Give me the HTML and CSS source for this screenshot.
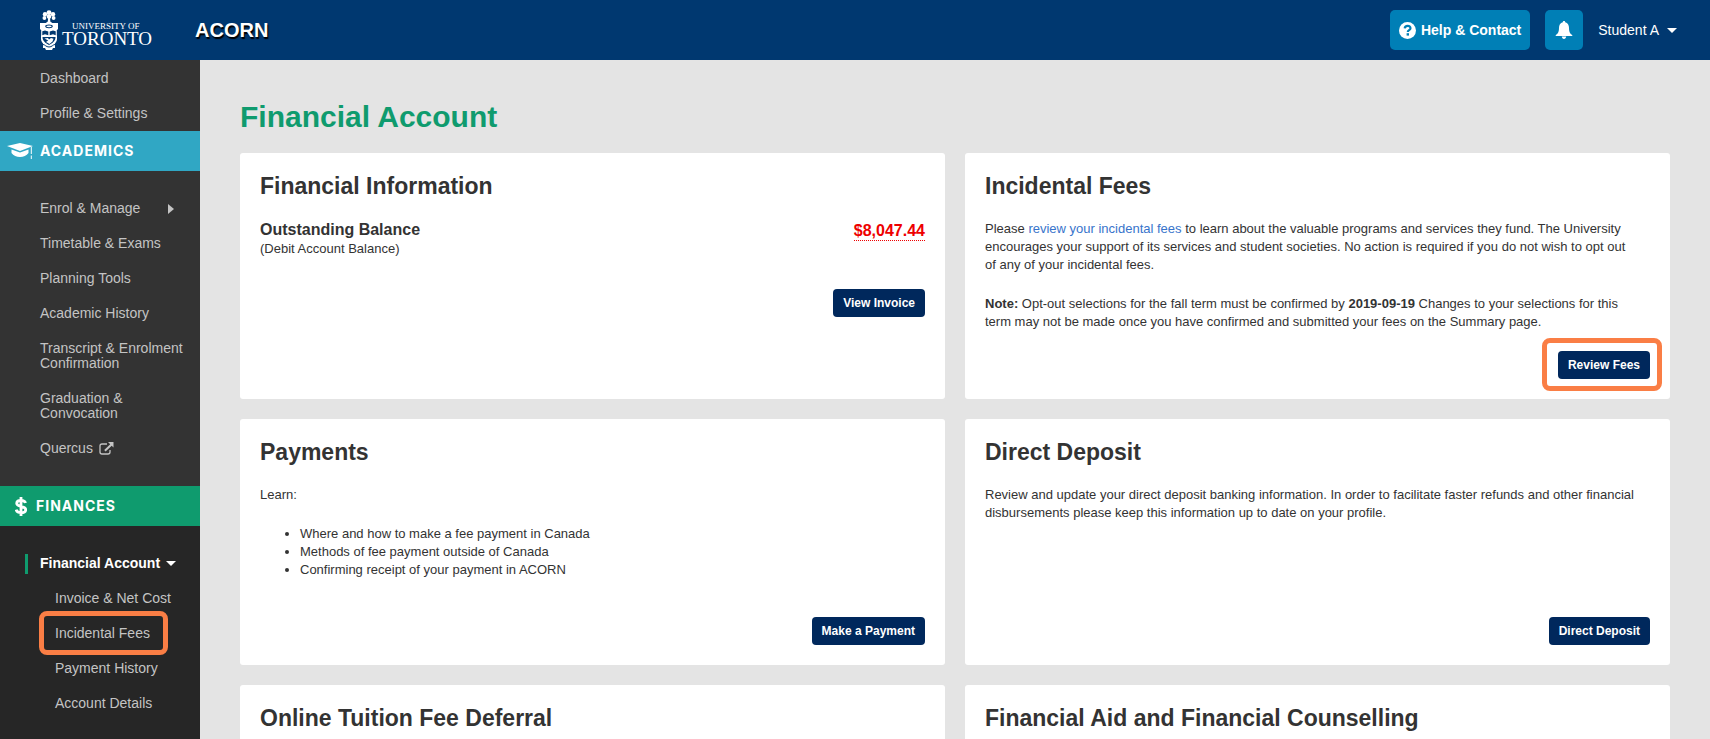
FILE: index.html
```
<!DOCTYPE html>
<html lang="en">
<head>
<meta charset="utf-8">
<meta name="viewport" content="width=device-width, initial-scale=1">
<title>Financial Account - ACORN</title>
<link rel="stylesheet" href="styles.css">
</head>
<body>
<header class="topbar">
  <a class="logo" href="#">
    <svg class="crest" viewBox="0 0 18 40" width="18" height="40" aria-hidden="true">
      <g fill="#fff">
        <circle cx="9" cy="2.6" r="2.4"/><circle cx="5" cy="4.2" r="2.2"/><circle cx="13" cy="4.2" r="2.2"/>
        <circle cx="4.4" cy="8" r="1.9"/><circle cx="13.6" cy="8" r="1.9"/><circle cx="9" cy="6.5" r="2.3"/>
        <path d="M8.200 7h1.800l.3 4.500 2 1.500H5.800l2-1.500z"/>
        <path d="M0 13h18v6.500h-1V29c0 2-1.500 3.500-2 4.500V38H13l-1 2H6l-1-2H3v-4.500C2.500 32.500 1 31 1 29v-9.500H0z"/>
      </g>
      <g fill="#003870">
        <ellipse cx="9" cy="16.300" rx="3.800" ry="1.900"/>
        <path d="M2.300 21.200 5 20.500l3.300 1v3.700L5 24.300l-2.700.9zM9.700 21.500l3.300-1 2.700.7v4l-2.700-.9-3.300.9z"/>
        <path d="M2.500 27h13c0 4-3 6-6.500 8-3.500-2-6.500-4-6.500-8z"/>
        <path d="M0 20h1.200v5.500H0zM16.800 20H18v5.500h-1.200zM0 32l3 2.200-1 3.300-2-1zM18 32l-3 2.200 1 3.300 2-1z"/>
      </g>
      <g fill="#fff">
        <ellipse cx="9" cy="16.300" rx="2.700" ry=".9"/>
        <path d="M4.500 28.500 8 28l1 1.500 2-1.500 2.500.8-1 2.700-3 2.500-3.500-2 2.200-1.500z"/>
      </g>
      <path d="M3 34.500c2 0 3 2.500 6 2.500s4-2.500 6-2.500" fill="none" stroke="#003870"/>
    </svg>
    <span class="wordmark"><span class="wordmark-top">UNIVERSITY OF</span><span class="wordmark-main">TORONTO</span></span>
  </a>
  <a class="brand" href="#">ACORN</a>
  <div class="tools">
    <button class="tool help" type="button">
      <svg viewBox="0 0 17 17" width="17" height="17" aria-hidden="true"><circle cx="8.500" cy="8.500" r="8.500" fill="#fff"/><path d="M5.700 6.400c.2-3.400 5.800-3.300 5.800-.2 0 2-2.700 1.800-2.700 3.700" fill="none" stroke="#007fb6" stroke-width="2.200"/><rect x="7.600" y="11.200" width="2.400" height="2.400" fill="#007fb6"/></svg>
      Help &amp; Contact
    </button>
    <button class="tool bell" type="button" aria-label="Notifications">
      <svg viewBox="0 0 18 18" width="18" height="18" aria-hidden="true"><path d="M9 0c.8 0 1.200.5 1.200 1.300C12.800 2 14 4.200 14 6.800c0 4.300 1 5.800 3.300 7.400v.8H.7v-.8C3 12.600 4 11.100 4 6.800 4 4.200 5.200 2 7.800 1.300 7.800.5 8.200 0 9 0zM6.800 15.500h4.400C11 17 10.200 18 9 18s-2-1-2.200-2.500z" fill="#fff"/></svg>
    </button>
    <button class="user" type="button">Student A
      <svg viewBox="0 0 10 5" width="10" height="5" aria-hidden="true"><path d="M0 0h10L5 5z" fill="#fff"/></svg>
    </button>
  </div>
</header>
<div class="shell">
  <nav class="sidebar" aria-label="Main">
    <ul class="menu menu-top">
      <li><a href="#">Dashboard</a></li>
      <li><a href="#">Profile &amp; Settings</a></li>
    </ul>
    <h2 class="section academics">
      <svg viewBox="0 0 26 16" width="26" height="16" aria-hidden="true"><g fill="#fff"><path d="M0 3 13 0l13 3-13 5z"/><path d="M4.500 6.500 13 9.600l8.500-3.100V10c-2 2.600-5 4-8.500 4s-6.500-1.400-8.500-4z"/><path d="M23.800 4h1v7h-1zM23.800 12.500h1V16h-1z"/></g></svg>
      ACADEMICS
    </h2>
    <ul class="menu menu-section">
      <li><a class="has-arrow" href="#">Enrol &amp; Manage <svg viewBox="0 0 6 10" width="6" height="10" aria-hidden="true"><path d="M0 0l6 5-6 5z" fill="#c4c4c4"/></svg></a></li>
      <li><a href="#">Timetable &amp; Exams</a></li>
      <li><a href="#">Planning Tools</a></li>
      <li><a href="#">Academic History</a></li>
      <li><a href="#">Transcript &amp; Enrolment Confirmation</a></li>
      <li><a href="#">Graduation &amp; Convocation</a></li>
      <li><a class="external" href="#">Quercus <svg viewBox="0 0 15 13" width="15" height="13" aria-hidden="true"><path d="M8 2H3Q1 2 1 4v6q0 2 2 2h6q2 0 2-2V8" fill="none" stroke="#c4c4c4" stroke-width="1.300"/><path d="M9 0h5.500v5.500L12.700 3.700 6.600 9.400 5.200 8l6-5.800z" fill="#c4c4c4"/></svg></a></li>
    </ul>
    <h2 class="section finances">
      <svg viewBox="0 0 12 19" width="12" height="19" aria-hidden="true"><path d="M10.500 6C10 4.200 8.500 3.300 6 3.300c-2.600 0-4.300 1-4.300 2.900 0 4.300 9 2 9 6.500 0 2-1.800 3-4.700 3-2.800 0-4.400-1-4.900-3M6 0v19" fill="none" stroke="#fff" stroke-width="2.800"/></svg>
      FINANCES
    </h2>
    <ul class="menu menu-section menu-dark">
      <li class="current"><a href="#">Financial Account <svg viewBox="0 0 10 5" width="10" height="5" aria-hidden="true"><path d="M0 0h10L5 5z" fill="#fff"/></svg></a>
        <ul class="submenu">
          <li><a href="#">Invoice &amp; Net Cost</a></li>
          <li class="marked"><a href="#">Incidental Fees</a></li>
          <li><a href="#">Payment History</a></li>
          <li><a href="#">Account Details</a></li>
        </ul>
      </li>
    </ul>
  </nav>
  <main class="content">
    <h1>Financial Account</h1>
    <div class="cards">
      <section class="card">
        <h2>Financial Information</h2>
        <div class="balance">
          <div>
            <h3>Outstanding Balance</h3>
            <p>(Debit Account Balance)</p>
          </div>
          <abbr class="amount">$8,047.44</abbr>
        </div>
        <a class="btn invoice" href="#">View Invoice</a>
      </section>
      <section class="card">
        <h2>Incidental Fees</h2>
        <p>Please <a class="link" href="#">review your incidental fees</a> to learn about the valuable programs and services they fund. The University encourages your support of its services and student societies. No action is required if you do not wish to opt out of any of your incidental fees.</p>
        <p><strong>Note:</strong> Opt-out selections for the fall term must be confirmed by <strong>2019-09-19</strong> Changes to your selections for this term may not be made once you have confirmed and submitted your fees on the Summary page.</p>
        <a class="btn bottom marked-btn" href="#">Review Fees</a>
      </section>
      <section class="card">
        <h2>Payments</h2>
        <p>Learn:</p>
        <ul class="bullets">
          <li>Where and how to make a fee payment in Canada</li>
          <li>Methods of fee payment outside of Canada</li>
          <li>Confirming receipt of your payment in ACORN</li>
        </ul>
        <a class="btn bottom" href="#">Make a Payment</a>
      </section>
      <section class="card">
        <h2>Direct Deposit</h2>
        <p>Review and update your direct deposit banking information. In order to facilitate faster refunds and other financial disbursements please keep this information up to date on your profile.</p>
        <a class="btn bottom" href="#">Direct Deposit</a>
      </section>
      <section class="card">
        <h2>Online Tuition Fee Deferral</h2>
      </section>
      <section class="card">
        <h2>Financial Aid and Financial Counselling</h2>
      </section>
    </div>
  </main>
</div>
</body>
</html>
```
FILE: styles.css
```
* { box-sizing: border-box; }
body {
  display: flex;
  flex-direction: column;
  height: 100vh;
  margin: 0;
  overflow: hidden;
  background: #e4e4e4;
  color: #333;
  font: 13px/18px "Liberation Sans", Arial, sans-serif;
}
h1, h2, h3, p, ul { margin: 0; padding: 0; }
ul { list-style: none; }
a { text-decoration: none; }
button { font: inherit; border: 0; cursor: pointer; }
svg { flex: none; }

.topbar {
  display: flex;
  flex: none;
  align-items: center;
  height: 60px;
  padding: 0 33px 0 40px;
  background: #003870;
  color: #fff;
}
.logo {
  display: flex;
  gap: 4px;
  width: 155px;
  color: #fff;
  font-family: "Liberation Serif", "Times New Roman", serif;
}
.wordmark { display: flex; flex-direction: column; padding-top: 11px; }
.wordmark-top { padding-left: 10px; font-size: 9px; line-height: 10px; }
.wordmark-main { font-size: 19px; line-height: 16px; }
.brand { color: #fff; font-size: 20px; font-weight: bold; text-shadow: 1px 2px 1px #000; }
.tools { display: flex; align-items: center; gap: 15px; margin-left: auto; }
.tool {
  display: flex;
  align-items: center;
  gap: 5px;
  height: 40px;
  border-radius: 5px;
  background: #007fb6;
  color: #fff;
  font-size: 14px;
  font-weight: bold;
}
.help { padding: 0 9px; }
.bell { padding: 0 10px; }
.user {
  display: flex;
  align-items: center;
  gap: 8px;
  padding: 0;
  background: none;
  color: #fff;
  font-size: 14px;
}

.shell { display: flex; flex: 1; min-height: 0; }
.sidebar {
  display: flex;
  flex: none;
  flex-direction: column;
  width: 200px;
  background: #333;
  font-size: 14px;
  line-height: 15px;
}
.menu a { display: block; padding: 10px 16px 10px 40px; color: #c4c4c4; }
.menu-top { padding-top: 1px; }
.menu-section { padding: 20px 0; }
.menu-dark { flex: 1; background: #262626; }
.menu .has-arrow {
  display: flex;
  align-items: center;
  justify-content: space-between;
  padding-right: 26px;
}
.menu .external { display: flex; align-items: center; gap: 6px; }
.section {
  display: flex;
  flex: none;
  align-items: center;
  gap: 7px;
  height: 40px;
  padding-left: 7px;
  color: #fff;
  font: bold 14px/20px Inter, "Open Sans", sans-serif;
  letter-spacing: 1px;
}
.academics { background: #30a7c4; }
.finances { gap: 9px; padding-left: 15px; background: #0f9b6e; }
.menu .current > a {
  display: flex;
  position: relative;
  align-items: center;
  gap: 6px;
  color: #fff;
  font-weight: bold;
}
.current > a::before {
  position: absolute;
  top: 8px;
  bottom: 7px;
  left: 25px;
  width: 3px;
  background: #0f9b6e;
  content: "";
}
.submenu a { padding-left: 55px; }
.marked, .marked-btn { position: relative; }
.marked::after, .marked-btn::after {
  position: absolute;
  border: 5px solid #fa7e45;
  border-radius: 8px;
  content: "";
  pointer-events: none;
}
.marked::after { inset: -5px 32px -4px 39px; }
.marked-btn::after { inset: -13px -12px -12px -16px; }

.content { flex: 1; padding: 40px; }
h1 { margin-bottom: 19px; color: #0f9b6e; font-size: 30px; line-height: 34px; }
.cards {
  display: grid;
  grid-template-columns: 1fr 1fr;
  grid-auto-rows: minmax(246px, auto);
  gap: 20px;
}
.card {
  display: flex;
  flex-direction: column;
  align-items: flex-start;
  padding: 20px;
  border-radius: 3px;
  background: #fff;
}
.card h2 { margin-bottom: 20px; font-size: 23px; line-height: 27px; }
.card p { padding-right: 14px; }
.card p + p, .bullets { margin-top: 21px; }
.bullets { padding-left: 40px; list-style: disc; }
.link { color: #3874cb; }
.balance { display: flex; align-items: flex-start; justify-content: space-between; width: 100%; }
.balance h3 { font-size: 16px; line-height: 20px; }
.amount {
  margin-top: 2px;
  border-bottom: 1px dotted #e00;
  color: #e00;
  font-size: 16px;
  font-weight: bold;
}
.btn {
  align-self: flex-end;
  padding: 5px 10px;
  border-radius: 4px;
  background: #00285c;
  color: #fff;
  font-size: 12px;
  font-weight: bold;
}
.invoice { margin-top: 31px; }
.bottom { margin-top: auto; }
```
